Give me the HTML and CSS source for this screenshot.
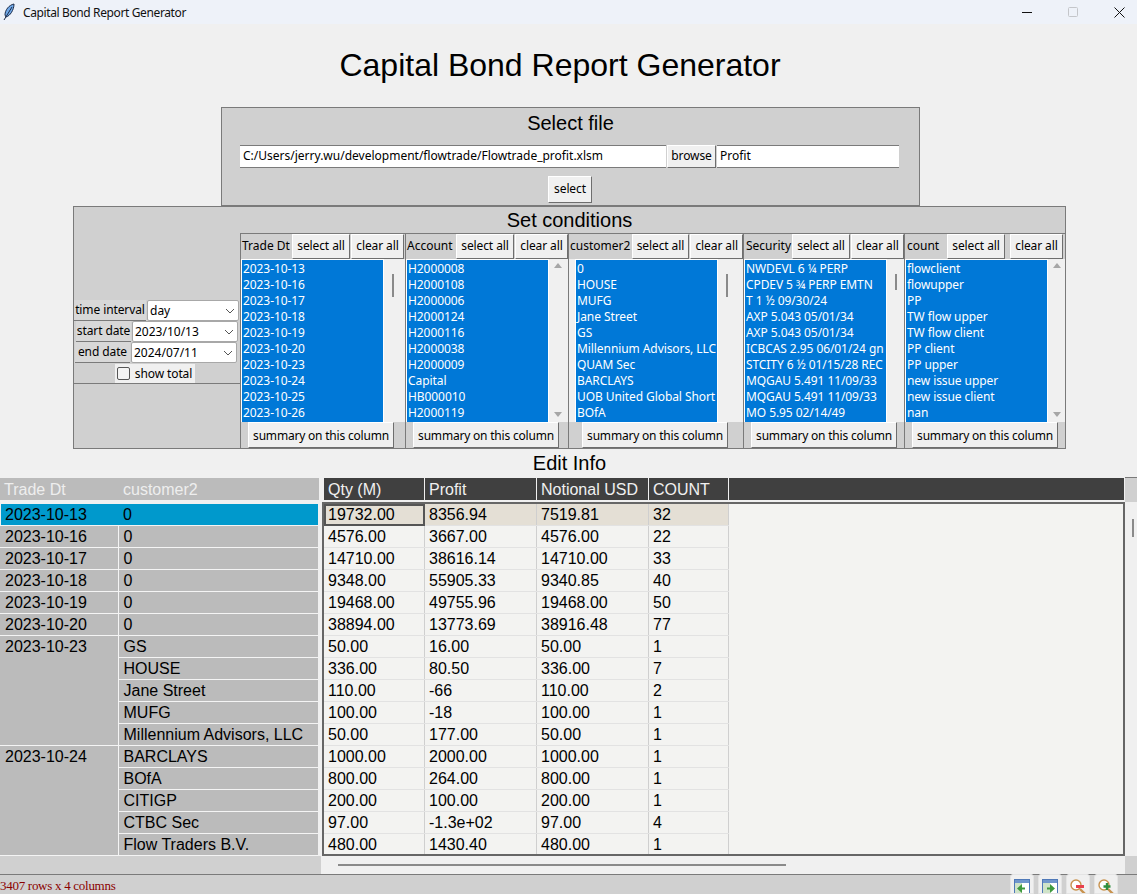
FILE: index.html
```html
<!DOCTYPE html>
<html lang="en">
<head>
    <meta charset="UTF-8">
    <title>Capital Bond Report Generator</title>
    <link rel="stylesheet" href="styles.css">
</head>
<body>
    <div class="titlebar">
        <svg class="feather" width="14" height="18" viewBox="0 0 14 18">
            <path d="M12 1C7 2 3 7 3 12l1 2C8 13 12 7 12 1z" fill="#6fa8e8" stroke="#1c2c4a" stroke-width="1"/>
            <path d="M10 4L2 17" stroke="#1c2c4a" stroke-width="1" fill="none"/>
        </svg>
        <span class="titlebar-text">Capital Bond Report Generator</span>
        <div class="win-buttons">
            <svg width="11" height="11" viewBox="0 0 11 11"><path d="M0 5.5H10" stroke="#111" fill="none"/></svg>
            <svg width="11" height="11" viewBox="0 0 11 11"><rect x="0.5" y="0.5" width="9" height="9" rx="1" fill="none" stroke="#c4c6ca"/></svg>
            <svg width="11" height="11" viewBox="0 0 11 11"><path d="M0.5 0.5L10.5 10.5M10.5 0.5L0.5 10.5" stroke="#111" fill="none"/></svg>
        </div>
    </div>

    <h1 class="app-title">Capital Bond Report Generator</h1>

    <div class="panel file-panel">
        <div class="panel-title">Select file</div>
        <div class="file-row">
            <div class="entry entry-path">C:/Users/jerry.wu/development/flowtrade/Flowtrade_profit.xlsm</div>
            <div class="btn btn-browse">browse</div>
            <div class="entry entry-sheet">Profit</div>
        </div>
        <div class="btn btn-select">select</div>
    </div>

    <div class="panel cond-panel">
        <div class="panel-title">Set conditions</div>
        <div class="cond-body">
            <div class="controls">
                <div class="ctl-row ctl-a"><span class="ctl-label label-a">time interval</span><span class="combo combo-a">day<svg class="chev" width="10" height="6" viewBox="0 0 10 6"><path d="M1 1L5 5L9 1" fill="none" stroke="#555"/></svg></span></div>
                <div class="ctl-row ctl-b"><span class="ctl-label label-b">start date</span><span class="combo combo-b">2023/10/13<svg class="chev" width="10" height="6" viewBox="0 0 10 6"><path d="M1 1L5 5L9 1" fill="none" stroke="#555"/></svg></span></div>
                <div class="ctl-row ctl-c"><span class="ctl-label label-b">end date</span><span class="combo combo-b">2024/07/11<svg class="chev" width="10" height="6" viewBox="0 0 10 6"><path d="M1 1L5 5L9 1" fill="none" stroke="#555"/></svg></span></div>
                <div class="ctl-check"><span class="check-wrap"><span class="checkbox"></span>show total</span></div>
            </div>

            <div class="col col-1">
                <div class="col-head"><span class="col-label label-1">Trade Dt</span><span class="btn btn-sel">select all</span><span class="btn btn-clr">clear all</span></div>
                <div class="col-list">
                    <div class="listbox">
                        <div>2023-10-13</div><div>2023-10-16</div><div>2023-10-17</div><div>2023-10-18</div><div>2023-10-19</div>
                        <div>2023-10-20</div><div>2023-10-23</div><div>2023-10-24</div><div>2023-10-25</div><div>2023-10-26</div>
                    </div>
                    <div class="vscroll"><span class="thumb thumb-long"></span></div>
                </div>
                <div class="col-foot foot-1"><span class="btn btn-sum">summary on this column</span></div>
            </div>

            <div class="col col-2">
                <div class="col-head"><span class="col-label label-2">Account</span><span class="btn btn-sel">select all</span><span class="btn btn-clr">clear all</span></div>
                <div class="col-list">
                    <div class="listbox">
                        <div>H2000008</div><div>H2000108</div><div>H2000006</div><div>H2000124</div><div>H2000116</div>
                        <div>H2000038</div><div>H2000009</div><div>Capital</div><div>HB000010</div><div>H2000119</div>
                    </div>
                    <div class="vscroll vscroll-arrows"><span class="arrow-up"></span><span class="arrow-down"></span></div>
                </div>
                <div class="col-foot foot-2"><span class="btn btn-sum">summary on this column</span></div>
            </div>

            <div class="col col-3">
                <div class="col-head"><span class="col-label label-3">customer2</span><span class="btn btn-sel">select all</span><span class="btn btn-clr">clear all</span></div>
                <div class="col-list list-inset">
                    <div class="listbox">
                        <div>0</div><div>HOUSE</div><div>MUFG</div><div>Jane Street</div><div>GS</div>
                        <div>Millennium Advisors, LLC</div><div>QUAM Sec</div><div>BARCLAYS</div><div>UOB United Global Short</div><div>BOfA</div>
                    </div>
                    <div class="vscroll"><span class="thumb thumb-long"></span></div>
                </div>
                <div class="col-foot foot-3"><span class="btn btn-sum">summary on this column</span></div>
            </div>

            <div class="col col-4">
                <div class="col-head"><span class="col-label label-4">Security</span><span class="btn btn-sel">select all</span><span class="btn btn-clr">clear all</span></div>
                <div class="col-list">
                    <div class="listbox">
                        <div>NWDEVL 6 ¼ PERP</div><div>CPDEV 5 ¾ PERP EMTN</div><div>T 1 ½ 09/30/24</div><div>AXP 5.043 05/01/34</div><div>AXP 5.043 05/01/34</div>
                        <div>ICBCAS 2.95 06/01/24 gn</div><div>STCITY 6 ½ 01/15/28 REC</div><div>MQGAU 5.491 11/09/33</div><div>MQGAU 5.491 11/09/33</div><div>MO 5.95 02/14/49</div>
                    </div>
                    <div class="vscroll"><span class="thumb thumb-short"></span></div>
                </div>
                <div class="col-foot foot-4"><span class="btn btn-sum">summary on this column</span></div>
            </div>

            <div class="col col-5">
                <div class="col-head"><span class="col-label label-5">count</span><span class="btn btn-sel">select all</span><span class="btn btn-clr btn-clr-gap">clear all</span></div>
                <div class="col-list">
                    <div class="listbox">
                        <div>flowclient</div><div>flowupper</div><div>PP</div><div>TW flow upper</div><div>TW flow client</div>
                        <div>PP client</div><div>PP upper</div><div>new issue upper</div><div>new issue client</div><div>nan</div>
                    </div>
                    <div class="vscroll vscroll-arrows"><span class="arrow-up"></span><span class="arrow-down"></span></div>
                </div>
                <div class="col-foot foot-5"><span class="btn btn-sum">summary on this column</span></div>
            </div>
        </div>
    </div>

    <div class="edit-title">Edit Info</div>

    <div class="table-wrap">
        <div class="table-top">
            <div class="index-head"><span class="ih-1">Trade Dt</span><span>customer2</span></div>
            <div class="col-heads">
                <span class="w-qty">Qty (M)</span><span class="w-profit">Profit</span><span class="w-usd">Notional USD</span><span class="w-count">COUNT</span>
            </div>
            <div class="corner"></div>
        </div>
        <div class="table-mid">
            <table class="index-table">
                <tr class="sel"><td class="i1">2023-10-13</td><td class="i2">0</td></tr>
                <tr><td class="i1">2023-10-16</td><td class="i2">0</td></tr>
                <tr><td class="i1">2023-10-17</td><td class="i2">0</td></tr>
                <tr><td class="i1">2023-10-18</td><td class="i2">0</td></tr>
                <tr><td class="i1">2023-10-19</td><td class="i2">0</td></tr>
                <tr><td class="i1">2023-10-20</td><td class="i2">0</td></tr>
                <tr><td class="i1" rowspan="5">2023-10-23</td><td class="i2">GS</td></tr>
                <tr><td class="i2">HOUSE</td></tr>
                <tr><td class="i2">Jane Street</td></tr>
                <tr><td class="i2">MUFG</td></tr>
                <tr><td class="i2">Millennium Advisors, LLC</td></tr>
                <tr><td class="i1" rowspan="5">2023-10-24</td><td class="i2">BARCLAYS</td></tr>
                <tr><td class="i2">BOfA</td></tr>
                <tr><td class="i2">CITIGP</td></tr>
                <tr><td class="i2">CTBC Sec</td></tr>
                <tr><td class="i2">Flow Traders B.V.</td></tr>
            </table>
            <div class="grid-box">
                <table class="data-table">
                    <tr class="row-sel"><td class="active w-qty">19732.00</td><td class="w-profit">8356.94</td><td class="w-usd">7519.81</td><td class="w-count">32</td></tr>
                    <tr><td>4576.00</td><td>3667.00</td><td>4576.00</td><td>22</td></tr>
                    <tr><td>14710.00</td><td>38616.14</td><td>14710.00</td><td>33</td></tr>
                    <tr><td>9348.00</td><td>55905.33</td><td>9340.85</td><td>40</td></tr>
                    <tr><td>19468.00</td><td>49755.96</td><td>19468.00</td><td>50</td></tr>
                    <tr><td>38894.00</td><td>13773.69</td><td>38916.48</td><td>77</td></tr>
                    <tr><td>50.00</td><td>16.00</td><td>50.00</td><td>1</td></tr>
                    <tr><td>336.00</td><td>80.50</td><td>336.00</td><td>7</td></tr>
                    <tr><td>110.00</td><td>-66</td><td>110.00</td><td>2</td></tr>
                    <tr><td>100.00</td><td>-18</td><td>100.00</td><td>1</td></tr>
                    <tr><td>50.00</td><td>177.00</td><td>50.00</td><td>1</td></tr>
                    <tr><td>1000.00</td><td>2000.00</td><td>1000.00</td><td>1</td></tr>
                    <tr><td>800.00</td><td>264.00</td><td>800.00</td><td>1</td></tr>
                    <tr><td>200.00</td><td>100.00</td><td>200.00</td><td>1</td></tr>
                    <tr><td>97.00</td><td>-1.3e+02</td><td>97.00</td><td>4</td></tr>
                    <tr><td>480.00</td><td>1430.40</td><td>480.00</td><td>1</td></tr>
                </table>
            </div>
            <div class="grid-vscroll"><span class="grid-thumb"></span></div>
        </div>
        <div class="table-bottom">
            <div class="bottom-left"></div>
            <div class="hscroll"><span class="hthumb"></span></div>
            <div class="bottom-corner"></div>
        </div>
    </div>

    <div class="statusbar">
        <span class="status-text">3407 rows x 4 columns</span>
        <div class="tools">
            <span class="tool"><svg width="16" height="16" viewBox="0 0 16 16"><rect x="0.5" y="1.5" width="15" height="14" fill="#fff" stroke="#4f79b8"/><rect x="1" y="2" width="14" height="3" fill="#6f96cc"/><rect x="1" y="5" width="7" height="10" fill="#cfe3c8"/><path d="M8 6v9L3 10.5z" fill="#3f9a3f"/><rect x="8" y="9.5" width="3" height="2" fill="#3f9a3f"/></svg></span>
            <span class="tool"><svg width="16" height="16" viewBox="0 0 16 16"><rect x="0.5" y="1.5" width="15" height="14" fill="#fff" stroke="#4f79b8"/><rect x="1" y="2" width="14" height="3" fill="#6f96cc"/><rect x="1" y="5" width="7" height="10" fill="#cfe3c8"/><path d="M8 6v9l5-4.5z" fill="#3f9a3f"/><rect x="5" y="9.5" width="3" height="2" fill="#3f9a3f"/></svg></span>
            <span class="tool"><svg width="18" height="18" viewBox="0 0 18 18"><circle cx="7" cy="7" r="5" fill="#fff" stroke="#c8924e" stroke-width="1.4"/><path d="M11 11l5 5" stroke="#c8924e" stroke-width="2.4"/><rect x="7" y="7" width="8" height="3" fill="#e8404c"/></svg></span>
            <span class="tool"><svg width="18" height="18" viewBox="0 0 18 18"><circle cx="7" cy="7" r="5" fill="#fff" stroke="#c8924e" stroke-width="1.4"/><path d="M11 11l5 5" stroke="#c8924e" stroke-width="2.4"/><path d="M10 5v7M6.5 8.5h7" stroke="#2f8f3f" stroke-width="2.4"/></svg></span>
        </div>
    </div>
</body>
</html>
```

FILE: styles.css
```css
/* window */
html, body {
    margin: 0;
    height: 894px;
    overflow: hidden;
}
body {
    background-color: #f0f0f0;
    font-family: "Noto Sans", "Open Sans", sans-serif;
    font-size: 12px;
    color: #000;
}

.titlebar {
    display: flex;
    align-items: center;
    height: 24px;
    background-color: #eef2f9;
    padding-left: 2px;
}
.feather {
    margin-right: 7px;
}
.titlebar-text {
    font-size: 12px;
    letter-spacing: -0.38px;
    color: #111;
}
.win-buttons {
    margin-left: auto;
    display: flex;
    gap: 35px;
    margin-right: 12px;
}

.app-title {
    margin: 0;
    height: 83px;
    line-height: 83px;
    padding-right: 17px;
    text-align: center;
    font-family: "Liberation Sans", Arial, sans-serif;
    font-weight: normal;
    font-size: 32px;
}

/* panels */
.panel {
    background-color: #d0d0d0;
    border: 1px solid #7a7a7a;
    box-sizing: border-box;
}
.panel-title {
    font-family: "Liberation Sans", Arial, sans-serif;
    font-size: 20px;
    text-align: center;
}
.file-panel {
    width: 699px;
    height: 99px;
    margin-left: 221px;
    padding-top: 4px;
}
.file-row {
    display: flex;
    margin: 10px 0 8px 18px;
    height: 23px;
}
.entry {
    background-color: #fff;
    border-top: 1px solid #7a7a7a;
    border-bottom: 1px solid #7a7a7a;
    box-sizing: border-box;
    line-height: 20px;
    padding-left: 3px;
}
.entry-path {
    width: 426px;
}
.entry-sheet {
    width: 182px;
}
.btn {
    display: inline-block;
    box-sizing: border-box;
    background-color: #f0f0f0;
    border-top: 1px solid #fff;
    border-left: 1px solid #fff;
    border-right: 1px solid #6e6e6e;
    border-bottom: 1px solid #6e6e6e;
    text-align: center;
    white-space: nowrap;
    letter-spacing: -0.1px;
}
.btn-browse {
    width: 49px;
    margin: 0 1px;
    line-height: 20px;
}
.btn-select {
    display: block;
    width: 44px;
    height: 27px;
    line-height: 24px;
    margin-left: 326px;
}

.cond-panel {
    width: 993px;
    height: 243px;
    margin-left: 73px;
    display: flex;
    flex-direction: column;
}
.cond-panel .panel-title {
    height: 27px;
    line-height: 26px;
}
.cond-body {
    display: flex;
    flex: 1;
}

/* left controls */
.controls {
    width: 166px;
    display: flex;
    flex-direction: column;
    justify-content: center;
    padding-top: 3px;
    box-sizing: border-box;
}
.ctl-row {
    display: flex;
    height: 21px;
}
.ctl-b {
    padding-left: 2px;
}
.ctl-c {
    padding-left: 1px;
}
.ctl-label {
    background-color: #d8d8d8;
    line-height: 20px;
    border-bottom: 1px solid #7a7a7a;
    white-space: nowrap;
    text-align: center;
    letter-spacing: -0.1px;
    box-sizing: border-box;
}
.label-a {
    width: 72px;
}
.label-b {
    width: 55px;
}
.combo {
    display: flex;
    align-items: center;
    justify-content: space-between;
    background-color: #fff;
    border: 1px solid #a8a8a8;
    border-radius: 2px;
    box-sizing: border-box;
    padding: 0 3px 0 2px;
    height: 21px;
    margin-left: 1px;
}
.combo-a {
    width: 92px;
}
.combo-b {
    width: 106px;
}
.ctl-check {
    height: 21px;
    display: flex;
    justify-content: center;
    border-bottom: 1px solid #7a7a7a;
    border-top: 1px solid #d0d0d0;
    box-sizing: border-box;
    padding-right: 4px;
}
.check-wrap {
    display: flex;
    align-items: center;
    gap: 5px;
    background-color: #f0f0f0;
    padding: 0 3px 0 2px;
    letter-spacing: -0.1px;
}
.checkbox {
    width: 11px;
    height: 11px;
    background-color: #f4f4f4;
    border: 1px solid #555;
    border-radius: 2px;
}

/* filter columns */
.col {
    display: flex;
    flex-direction: column;
    border-left: 1px solid #7a7a7a;
    box-sizing: border-box;
}
.col-1 { width: 165px; }
.col-2 { width: 163px; }
.col-3 { width: 175px; }
.col-4 { width: 161px; }
.col-5 { width: 161px; }

.col-head {
    display: flex;
    height: 26px;
    border-top: 1px solid #7a7a7a;
    box-sizing: border-box;
}
.col-label {
    line-height: 23px;
    white-space: nowrap;
    overflow: hidden;
    padding-left: 1px;
}
.label-1 { width: 50px; }
.label-2 { width: 49px; }
.label-3 { width: 62px; }
.label-4 { width: 46px; padding-left: 2px; }
.label-5 { width: 40px; padding-left: 2px; }
.btn-sel {
    width: 58px;
    line-height: 22px;
    margin-right: 1px;
}
.btn-clr {
    width: 53px;
    line-height: 22px;
}
.btn-clr-gap {
    margin-left: 4px;
}
.col-list {
    display: flex;
    height: 163px;
    background-color: #f0f0f0;
}
.list-inset {
    padding-left: 6px;
}
.listbox {
    width: 141px;
    height: 161px;
    box-sizing: content-box;
    padding-top: 1px;
    background-color: #0078d7;
    color: #fff;
    border: 1px solid #fff;
    border-bottom: 0;
    overflow: hidden;
    flex-shrink: 0;
    letter-spacing: -0.08px;
}
.listbox div {
    height: 16px;
    line-height: 16px;
    padding-left: 1px;
    white-space: nowrap;
}
.vscroll {
    display: flex;
    flex-direction: column;
    align-items: center;
    width: 18px;
    background-color: #f0f0f0;
}
.vscroll-arrows {
    justify-content: space-between;
    padding: 4px 0 3px;
    box-sizing: border-box;
    height: 161px;
}
.arrow-up, .arrow-down {
    width: 0;
    height: 0;
    border-left: 4px solid transparent;
    border-right: 4px solid transparent;
}
.arrow-up {
    border-bottom: 5px solid #a6a6a6;
}
.arrow-down {
    border-top: 5px solid #a6a6a6;
}
.thumb {
    width: 2px;
    margin-top: 15px;
    background-color: #8a8a8a;
}
.thumb-long { height: 23px; }
.thumb-short { height: 16px; }

.col-foot {
    height: 26px;
    display: flex;
}
.btn-sum {
    width: 146px;
    line-height: 25px;
    letter-spacing: -0.2px;
}
.foot-1, .foot-2, .foot-4, .foot-5 { padding-left: 7px; }
.foot-3 { padding-left: 13px; }

.edit-title {
    height: 28px;
    line-height: 28px;
    padding-left: 2px;
    text-align: center;
    font-family: "Liberation Sans", Arial, sans-serif;
    font-size: 20px;
}

/* data table */
.table-wrap {
    font-family: "Liberation Sans", Arial, sans-serif;
    font-size: 16px;
}
.table-top {
    display: flex;
    height: 25px;
}
.index-head {
    width: 319px;
    height: 22px;
    margin-top: 1px;
    background-color: #bbbbbb;
    color: #eeeeee;
    line-height: 24px;
    display: flex;
}
.ih-1 {
    width: 123px;
    padding-left: 4px;
    box-sizing: border-box;
}
.col-heads {
    width: 800px;
    height: 22px;
    margin: 1px 0 0 5px;
    background-color: #404040;
    color: #f0f0f0;
    line-height: 24px;
    display: flex;
}
.col-heads span {
    box-sizing: border-box;
    padding-left: 4px;
    border-right: 1px solid #f0f0f0;
}
.col-heads .w-qty { width: 101px; }
.col-heads .w-profit { width: 112px; }
.col-heads .w-usd { width: 112px; }
.col-heads .w-count { width: 80px; }
.corner {
    width: 12px;
    margin-left: 1px;
    height: 25px;
    background-color: #d0d0d0;
    border-top: 1px solid #7a7a7a;
    box-sizing: border-box;
}
.table-mid {
    display: flex;
    height: 354px;
}
table {
    border-collapse: collapse;
    table-layout: fixed;
}
.index-table {
    width: 318px;
    height: 352px;
    margin: 2px 4px 0 0;
    background-color: #bbbbbb;
    flex-shrink: 0;
}
.index-table td {
    height: 20px;
    line-height: 20px;
    padding: 1px 0 0 5px;
    vertical-align: top;
    border-bottom: 1px solid #f4f4f4;
    white-space: nowrap;
}
.index-table .i1 {
    width: 113px;
    border-right: 1px solid #f4f4f4;
}
.index-table .sel td {
    background-color: #0099cc;
    border-right: none;
}
.index-table .sel .i1 {
    box-shadow: inset 1px 0 0 #f0f0f0;
}
.grid-box {
    width: 803px;
    height: 354px;
    background-color: #f3f3f1;
    border: 2px solid #666;
    box-sizing: border-box;
    overflow: hidden;
}
.data-table {
    width: 405px;
}
.data-table td {
    height: 21px;
    line-height: 21px;
    padding: 0 0 0 4px;
    border-right: 1px solid #cfcfcf;
    border-bottom: 1px solid #e2e2e2;
    white-space: nowrap;
    box-sizing: content-box;
}
.data-table .w-qty { width: 96px; }
.data-table .w-profit { width: 107px; }
.data-table .w-usd { width: 107px; }
.data-table .w-count { width: 75px; }
.row-sel td {
    background-color: #e4dfd5;
}
.data-table .active {
    outline: 2px solid #555;
    outline-offset: -2px;
}
.grid-vscroll {
    width: 12px;
    display: flex;
    justify-content: flex-end;
    background-color: #f0f0f0;
}
.grid-thumb {
    width: 2px;
    height: 18px;
    margin: 17px 3px 0 0;
    background-color: #8a8a8a;
}
.table-bottom {
    display: flex;
    height: 18px;
}
.bottom-left {
    width: 321px;
    background-color: #d0d0d0;
}
.hscroll {
    width: 804px;
    background-color: #f0f0f0;
    padding: 8px 0 0 17px;
    box-sizing: border-box;
}
.hthumb {
    display: block;
    width: 448px;
    height: 2px;
    background-color: #8a8a8a;
}
.bottom-corner {
    flex: 1;
    background-color: #d0d0d0;
}

.statusbar {
    display: flex;
    height: 20px;
    background-color: #d0d0d0;
    border-top: 1px solid #7a7a7a;
    box-sizing: border-box;
}
.status-text {
    font-family: "Liberation Serif", "Times New Roman", serif;
    font-size: 13px;
    letter-spacing: -0.28px;
    line-height: 21px;
    color: #8b0000;
}
.tools {
    margin-left: auto;
    margin-right: 19px;
    display: flex;
    gap: 4px;
    margin-top: -1px;
}
.tool {
    width: 24px;
    height: 20px;
    box-sizing: border-box;
    background-color: #f0f0f0;
    border: 1px solid #e4e4e4;
    border-radius: 3px 3px 0 0;
    display: flex;
    justify-content: center;
    padding-top: 3px;
    overflow: hidden;
}
```
